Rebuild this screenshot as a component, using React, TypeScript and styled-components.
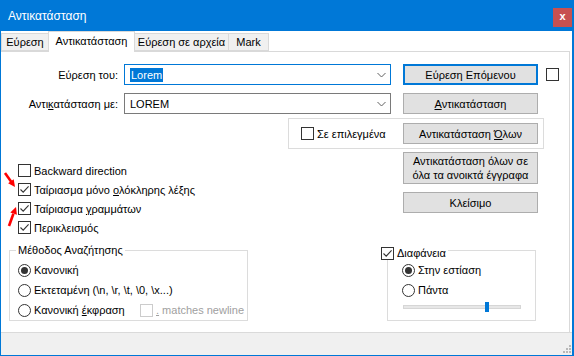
import React from "react";
import styled, { createGlobalStyle } from "styled-components";

const GlobalStyle = createGlobalStyle`
  * {
    box-sizing: border-box;
  }
  body {
    margin: 0;
    background: #fff;
    font-family: "Liberation Sans", Arial, sans-serif;
    font-size: 11px;
    color: #000;
  }
`;

const BLUE = "#0078d7";

const Window = styled.div`
  width: 574px;
  height: 356px;
  display: flex;
  flex-direction: column;
  background: ${BLUE};
  padding: 0 2px 1px 1px;
`;

const TitleBar = styled.div`
  height: 31px;
  display: flex;
  align-items: center;
  padding-left: 7px;
  color: #fff;
  font-size: 12px;
`;

const TitleText = styled.span`
  margin-top: 1px;
  flex: 1;
`;

const CloseButton = styled.div`
  align-self: flex-start;
  margin-top: 8px;
  width: 19px;
  height: 19px;
  background: #c75050;
  color: #fff;
  font-weight: bold;
  font-size: 11px;
  display: flex;
  align-items: center;
  justify-content: center;
  line-height: 1;
  padding-bottom: 2px;
`;

const Body = styled.div`
  flex: 1;
  background: #fff;
  display: flex;
  flex-direction: column;
`;

const TabStrip = styled.div`
  height: 20px;
  display: flex;
  align-items: flex-end;
  position: relative;
  z-index: 1;
`;

const Tab = styled.div<{ $active?: boolean; $w: number }>`
  width: ${(p) => p.$w}px;
  height: ${(p) => (p.$active ? 21 : 18)}px;
  margin-bottom: ${(p) => (p.$active ? -1 : 0)}px;
  margin-left: -1px;
  background: ${(p) => (p.$active ? "#fff" : "#f0f0f0")};
  border: 1px solid #d9d9d9;
  border-bottom: ${(p) => (p.$active ? "none" : "1px solid #d9d9d9")};
  display: flex;
  align-items: center;
  justify-content: center;
  padding-bottom: ${(p) => (p.$active ? 2 : 0)}px;
  position: relative;
  z-index: ${(p) => (p.$active ? 2 : 0)};
  &:first-child {
    margin-left: 0;
  }
`;

const Panel = styled.div`
  flex: 1;
  position: relative;
  border-top: 1px solid #d9d9d9;
  border-right: 1px solid #d9d9d9;
  margin-right: 2px;
  padding-top: 12px;
`;

const FieldRow = styled.div<{ $mt?: number }>`
  display: flex;
  align-items: center;
  height: 21px;
  margin-top: ${(p) => p.$mt ?? 0}px;
`;

const FieldLabel = styled.div`
  width: 117px;
  margin-right: 6px;
  text-align: right;
  white-space: nowrap;
`;

const Combo = styled.div<{ $focused?: boolean }>`
  width: 267px;
  height: 21px;
  margin-right: 12px;
  border: 1px solid ${(p) => (p.$focused ? BLUE : "#7a7a7a")};
  display: flex;
  align-items: center;
  padding-left: 5px;
  padding-right: 4px;
`;

const ComboText = styled.span`
  flex: 1;
`;

const Selected = styled.span`
  background: ${BLUE};
  color: #fff;
  padding: 1px 1px;
`;

const Button = styled.div<{ $default?: boolean; $h?: number }>`
  width: 135px;
  height: ${(p) => p.$h ?? 21}px;
  background: #e1e1e1;
  border: ${(p) => (p.$default ? `2px solid ${BLUE}` : "1px solid #adadad")};
  display: flex;
  align-items: center;
  justify-content: center;
  text-align: center;
  line-height: 14px;
  flex-shrink: 0;
`;

const CheckBox = styled.div<{ $disabled?: boolean; $ml?: number }>`
  width: 13px;
  height: 13px;
  flex-shrink: 0;
  margin-left: ${(p) => p.$ml ?? 0}px;
  border: 1px solid ${(p) => (p.$disabled ? "#cccccc" : "#333333")};
  background: #fff;
  display: flex;
  align-items: center;
  justify-content: center;
`;

const SelectionGroup = styled.div`
  margin-top: 4px;
  margin-left: 287px;
  width: 256px;
  height: 31px;
  border: 1px solid #dcdcdc;
  display: flex;
  align-items: center;
  padding-left: 12px;
  padding-right: 5px;
  gap: 3px;
  & > ${Button} {
    margin-left: auto;
  }
`;

const LowerSection = styled.div`
  margin-top: 3px;
  height: 91px;
  display: flex;
`;

const OptionList = styled.div`
  padding-left: 17px;
  padding-top: 9px;
  display: flex;
  flex-direction: column;
`;

const Option = styled.div<{ $h?: number; $disabled?: boolean }>`
  display: flex;
  align-items: center;
  gap: 3px;
  height: ${(p) => p.$h ?? 19}px;
  white-space: nowrap;
  color: ${(p) => (p.$disabled ? "#a0a0a0" : "#000")};
`;

const ButtonColumn = styled.div`
  margin-left: auto;
  margin-right: 31px;
  display: flex;
  flex-direction: column;
  gap: 8px;
`;

const BottomRow = styled.div`
  display: flex;
  margin-top: 7px;
`;

const GroupBox = styled.div<{ $ml: number; $w: number; $pl: number }>`
  position: relative;
  margin-left: ${(p) => p.$ml}px;
  width: ${(p) => p.$w}px;
  height: 71px;
  border: 1px solid #dcdcdc;
  padding-top: 9px;
  padding-left: ${(p) => p.$pl}px;
`;

const Legend = styled.div`
  position: absolute;
  top: -7px;
  left: 6px;
  background: #fff;
  padding: 0 2px;
  line-height: 13px;
  white-space: nowrap;
`;

const CheckLegend = styled.div`
  position: absolute;
  top: -4px;
  left: -7px;
  background: #fff;
  padding-right: 2px;
  display: flex;
  align-items: center;
  gap: 3px;
  line-height: 13px;
`;

const Radio = styled.div<{ $checked?: boolean }>`
  width: 13px;
  height: 13px;
  flex-shrink: 0;
  border-radius: 50%;
  border: 1px solid #333;
  background: #fff;
  display: flex;
  align-items: center;
  justify-content: center;
  &::after {
    content: "";
    width: 7px;
    height: 7px;
    border-radius: 50%;
    background: ${(p) => (p.$checked ? "#333" : "transparent")};
  }
`;

const RegexRow = styled.div`
  display: grid;
  grid-template-columns: 122px auto;
  align-items: center;
  height: 20px;
`;

const Slider = styled.div`
  position: relative;
  margin-top: 5px;
  margin-left: 1px;
  width: 118px;
  height: 4px;
  background: #e7e7e7;
  border: 1px solid #d6d6d6;
`;

const SliderThumb = styled.div`
  position: absolute;
  left: 81px;
  top: -4px;
  width: 4px;
  height: 10px;
  background: ${BLUE};
`;

const StatusBar = styled.div`
  height: 23px;
  background: #f0f0f0;
  border-top: 1px solid #dadada;
  display: flex;
  justify-content: flex-end;
  align-items: flex-end;
  padding: 0 1px 2px 0;
`;

const Arrows = styled.svg`
  position: absolute;
  left: 0;
  top: 112px;
`;

const Check = () => (
  <svg width="11" height="11" viewBox="0 0 11 11">
    <path d="M1.5 5.5 L4.2 8.2 L9.6 2.4" fill="none" stroke="#333" strokeWidth="1.1" />
  </svg>
);

const Chevron = () => (
  <svg width="9" height="6" viewBox="0 0 9 6">
    <path d="M0.5 1 L4.5 5 L8.5 1" fill="none" stroke="#606060" strokeWidth="1" />
  </svg>
);

const Grip = () => (
  <svg width="8" height="8" viewBox="0 0 8 8" fill="#b8b8b8">
    <rect x="6" y="0" width="2" height="2" />
    <rect x="3" y="3" width="2" height="2" />
    <rect x="6" y="3" width="2" height="2" />
    <rect x="0" y="6" width="2" height="2" />
    <rect x="3" y="6" width="2" height="2" />
    <rect x="6" y="6" width="2" height="2" />
  </svg>
);

const CheckOption: React.FC<{ checked?: boolean; children: React.ReactNode }> = ({
  checked,
  children,
}) => (
  <Option>
    <CheckBox>{checked && <Check />}</CheckBox>
    <span>{children}</span>
  </Option>
);

const RadioOption: React.FC<{ checked?: boolean; children: React.ReactNode }> = ({
  checked,
  children,
}) => (
  <Option $h={20}>
    <Radio $checked={checked} />
    <span>{children}</span>
  </Option>
);

const App: React.FC = () => {
  return (
    <>
      <GlobalStyle />
      <Window>
        <TitleBar>
          <TitleText>Αντικατάσταση</TitleText>
          <CloseButton>x</CloseButton>
        </TitleBar>
        <Body>
          <TabStrip>
            <Tab $w={48}>Εύρεση</Tab>
            <Tab $w={87} $active>
              Αντικατάσταση
            </Tab>
            <Tab $w={95}>Εύρεση σε αρχεία</Tab>
            <Tab $w={41}>Mark</Tab>
          </TabStrip>
          <Panel>
            <FieldRow>
              <FieldLabel>Εύρεση του:</FieldLabel>
              <Combo $focused>
                <ComboText>
                  <Selected>Lorem</Selected>
                </ComboText>
                <Chevron />
              </Combo>
              <Button $default>Εύρεση Επόμενου</Button>
              <CheckBox $ml={8} />
            </FieldRow>
            <FieldRow $mt={8}>
              <FieldLabel>
                Αντι<u>κ</u>ατάσταση με:
              </FieldLabel>
              <Combo>
                <ComboText>LOREM</ComboText>
                <Chevron />
              </Combo>
              <Button>
                <span>
                  <u>Α</u>ντικατάσταση
                </span>
              </Button>
            </FieldRow>
            <SelectionGroup>
              <CheckBox />
              <span>Σε επιλεγμένα</span>
              <Button>
                <span>
                  Αντικατάσταση <u>Ό</u>λων
                </span>
              </Button>
            </SelectionGroup>
            <LowerSection>
              <OptionList>
                <CheckOption>Backward direction</CheckOption>
                <CheckOption checked>
                  Ταίριασμα μόνο <u>ο</u>λόκληρης λέξης
                </CheckOption>
                <CheckOption checked>
                  Ταίριασμα <u>γ</u>ραμμάτων
                </CheckOption>
                <CheckOption checked>Περικλεισμός</CheckOption>
              </OptionList>
              <ButtonColumn>
                <Button $h={32}>
                  Αντικατάσταση όλων σε
                  <br />
                  όλα τα ανοικτά έγγραφα
                </Button>
                <Button>Κλείσιμο</Button>
              </ButtonColumn>
            </LowerSection>
            <BottomRow>
              <GroupBox $ml={8} $w={239} $pl={8}>
                <Legend>Μέθοδος Αναζήτησης</Legend>
                <RadioOption checked>Κανονική</RadioOption>
                <RadioOption>Εκτεταμένη (\n, \r, \t, \0, \x...)</RadioOption>
                <RegexRow>
                  <RadioOption>
                    Κανονική <u>έ</u>κφραση
                  </RadioOption>
                  <Option $disabled>
                    <CheckBox $disabled />
                    <span>
                      <u>.</u> matches newline
                    </span>
                  </Option>
                </RegexRow>
              </GroupBox>
              <GroupBox $ml={139} $w={149} $pl={14}>
                <CheckLegend>
                  <CheckBox>
                    <Check />
                  </CheckBox>
                  <span>Διαφάνεια</span>
                </CheckLegend>
                <RadioOption checked>Στην εστίαση</RadioOption>
                <RadioOption>Πάντα</RadioOption>
                <Slider>
                  <SliderThumb />
                </Slider>
              </GroupBox>
            </BottomRow>
            <Arrows width="22" height="66" viewBox="0 0 22 66">
              <line x1="4" y1="9" x2="10.2" y2="17.7" stroke="#f00" strokeWidth="2.6" />
              <polygon points="14,23 7.1,19.3 12.7,15.3" fill="#f00" />
              <line x1="8" y1="62" x2="12.4" y2="49.8" stroke="#f00" strokeWidth="2.6" />
              <polygon points="15,43 15.9,50.8 9.3,48.4" fill="#f00" />
            </Arrows>
          </Panel>
          <StatusBar>
            <Grip />
          </StatusBar>
        </Body>
      </Window>
    </>
  );
};

export default App;
